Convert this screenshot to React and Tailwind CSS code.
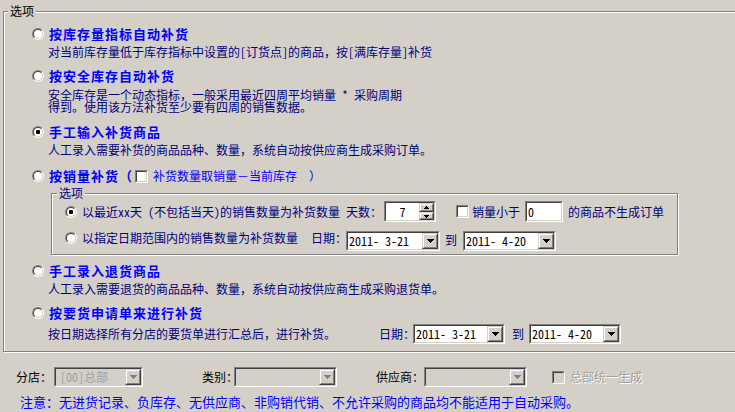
import React from 'react';

function Radio({ checked }) {
  return (
    <span className="relative block w-[12px] h-[12px] shrink-0 rounded-full border border-t-[#808080] border-l-[#808080] border-b-white border-r-white">
      <span className="absolute inset-0 flex items-center justify-center rounded-full border border-t-[#404040] border-l-[#404040] border-b-[#d4d0c8] border-r-[#d4d0c8] bg-white">
        {checked && <span className="block w-[4px] h-[4px] rounded-[1px] bg-black" />}
      </span>
    </span>
  );
}

function Check({ disabled }) {
  return (
    <span className="block w-[13px] h-[13px] shrink-0 border border-t-[#808080] border-l-[#808080] border-b-white border-r-white">
      <span
        className={`block w-full h-full border border-t-[#404040] border-l-[#404040] border-b-[#d4d0c8] border-r-[#d4d0c8] ${
          disabled ? 'bg-[#d4d0c8]' : 'bg-white'
        }`}
      />
    </span>
  );
}

function Sunken({ className = '', inner = 'bg-white', children }) {
  return (
    <div className={`shrink-0 border border-t-[#808080] border-l-[#808080] border-b-white border-r-white ${className}`}>
      <div className={`flex h-full w-full items-center border border-t-[#404040] border-l-[#404040] border-b-[#d4d0c8] border-r-[#d4d0c8] ${inner}`}>
        {children}
      </div>
    </div>
  );
}

function Btn({ className = '', children }) {
  return (
    <div className={`shrink-0 border border-t-[#d4d0c8] border-l-[#d4d0c8] border-b-[#404040] border-r-[#404040] ${className}`}>
      <div className="flex h-full w-full items-center justify-center border border-t-white border-l-white border-b-[#808080] border-r-[#808080] bg-[#d4d0c8]">
        {children}
      </div>
    </div>
  );
}

function Down({ color = '#000' }) {
  return (
    <svg width="7" height="4" viewBox="0 0 7 4" shapeRendering="crispEdges">
      <rect x="0" y="0" width="7" height="1" fill={color} />
      <rect x="1" y="1" width="5" height="1" fill={color} />
      <rect x="2" y="2" width="3" height="1" fill={color} />
      <rect x="3" y="3" width="1" height="1" fill={color} />
    </svg>
  );
}

function SmallArrow({ up }) {
  return (
    <svg width="5" height="3" viewBox="0 0 5 3" shapeRendering="crispEdges">
      {up ? (
        <>
          <rect x="2" y="0" width="1" height="1" fill="#000" />
          <rect x="1" y="1" width="3" height="1" fill="#000" />
          <rect x="0" y="2" width="5" height="1" fill="#000" />
        </>
      ) : (
        <>
          <rect x="0" y="0" width="5" height="1" fill="#000" />
          <rect x="1" y="1" width="3" height="1" fill="#000" />
          <rect x="2" y="2" width="1" height="1" fill="#000" />
        </>
      )}
    </svg>
  );
}

function Combo({ w, value = '', disabled }) {
  return (
    <Sunken className={`${w} h-[20px]`} inner={disabled ? 'bg-[#d4d0c8]' : 'bg-white'}>
      <span
        className={`flex-1 whitespace-pre text-[12px] leading-[12px] ${
          disabled ? 'pl-[4px] text-[#a0a0a0]' : 'pl-[1px] text-black'
        }`}
      >
        {value}
      </span>
      <Btn className="w-[16px] h-full">
        <Down color={disabled ? '#808080' : '#000'} />
      </Btn>
    </Sunken>
  );
}

const title = 'ml-[5px] whitespace-pre text-[13px] font-bold tracking-[1px] text-[#0000ff]';
const etched = 'border border-[#808080] shadow-[inset_1px_1px_0_#fff,1px_1px_0_#fff]';

export default function App() {
  return (
    <div className="w-[735px] h-[412px] overflow-hidden bg-[#d4d0c8] [font-family:'Noto_Sans_Mono_CJK_SC','Noto_Sans_CJK_SC',sans-serif] text-[12px] leading-[12px]">
      <div className="pt-[11px] pl-[3px]">
        <div className={`relative w-[760px] h-[341px] pl-[28px] ${etched}`}>
          <span className="absolute left-[4px] top-[-7px] px-[2px] bg-[#d4d0c8] text-black">选项</span>

          <div className="mt-[16px] flex h-[12px] items-center">
            <Radio />
            <span className={title}>按库存量指标自动补货</span>
          </div>
          <div className="mt-[6px] ml-[16px] whitespace-pre text-[#000080]">
            对当前库存量低于库存指标中设置的[订货点]的商品，按[满库存量]补货
          </div>

          <div className="mt-[12px] flex h-[12px] items-center">
            <Radio />
            <span className={title}>按安全库存自动补货</span>
          </div>
          <div className="mt-[7px] ml-[16px] flex flex-col text-[#000080]">
            <span className="h-[12px] whitespace-pre leading-[11px]">安全库存是一个动态指标，一般采用最近四周平均销量 * 采购周期</span>
            <span className="h-[12px] whitespace-pre leading-[11px]">得到。使用该方法补货至少要有四周的销售数据。</span>
          </div>

          <div className="mt-[13px] flex h-[12px] items-center">
            <Radio checked />
            <span className={title}>手工输入补货商品</span>
          </div>
          <div className="mt-[6px] ml-[16px] whitespace-pre text-[#000080]">
            人工录入需要补货的商品品种、数量，系统自动按供应商生成采购订单。
          </div>

          <div className="mt-[14px] flex h-[12px] items-center">
            <Radio />
            <span className={title}>按销量补货（</span>
            <span className="ml-[2px]">
              <Check />
            </span>
            <span className="ml-[5px] whitespace-pre text-[#0000ff]">补货数量取销量－当前库存  ）</span>
          </div>

          <div className={`relative mt-[11px] ml-[19px] w-[627px] h-[62px] pt-[7px] pl-[13px] ${etched}`}>
            <span className="absolute left-[5px] top-[-7px] px-[2px] bg-[#d4d0c8] text-[#000080]">选项</span>
            <div className="flex h-[21px] items-center text-[#000080]">
              <Radio checked />
              <span className="ml-[5px] w-[264px] shrink-0 whitespace-pre">以最近xx天 (不包括当天)的销售数量为补货数量</span>
              <span className="w-[38px] shrink-0 whitespace-pre">天数：</span>
              <Sunken className="w-[52px] h-[21px]">
                <span className="flex-1 text-center text-black">7</span>
                <div className="flex h-full w-[15px] flex-col">
                  <Btn className="h-[9px] w-full">
                    <SmallArrow up />
                  </Btn>
                  <Btn className="h-[8px] w-full">
                    <SmallArrow />
                  </Btn>
                </div>
              </Sunken>
              <span className="ml-[20px]">
                <Check />
              </span>
              <span className="ml-[3px] w-[53px] shrink-0 whitespace-pre">销量小于</span>
              <Sunken className="w-[38px] h-[21px]">
                <span className="pl-[1px] text-black">0</span>
              </Sunken>
              <span className="ml-[5px] whitespace-pre">的商品不生成订单</span>
            </div>
            <div className="mt-[9px] flex h-[20px] items-start text-[#000080]">
              <span className="mt-[1px]">
                <Radio />
              </span>
              <span className="ml-[5px] mt-[1px] w-[229px] shrink-0 whitespace-pre">以指定日期范围内的销售数量为补货数量</span>
              <span className="mt-[1px] w-[35px] shrink-0 whitespace-pre">日期：</span>
              <Combo w="w-[94px]" value="2011- 3-21" />
              <span className="ml-[5px] mt-[3px] w-[12px] shrink-0">到</span>
              <span className="ml-[6px]">
                <Combo w="w-[93px]" value="2011- 4-20" />
              </span>
            </div>
          </div>

          <div className="mt-[10px] flex h-[12px] items-center">
            <Radio />
            <span className={title}>手工录入退货商品</span>
          </div>
          <div className="mt-[6px] ml-[16px] whitespace-pre text-[#000080]">
            人工录入需要退货的商品品种、数量，系统自动按供应商生成采购退货单。
          </div>

          <div className="mt-[12px] flex h-[12px] items-center">
            <Radio />
            <span className={title}>按要货申请单来进行补货</span>
          </div>
          <div className="mt-[5px] ml-[16px] flex h-[20px] items-center text-[#000080]">
            <span className="w-[331px] shrink-0 whitespace-pre">按日期选择所有分店的要货单进行汇总后，进行补货。</span>
            <span className="w-[34px] shrink-0 whitespace-pre">日期：</span>
            <Combo w="w-[92px]" value="2011- 3-21" />
            <span className="ml-[7px] w-[12px] shrink-0">到</span>
            <span className="ml-[5px]">
              <Combo w="w-[92px]" value="2011- 4-20" />
            </span>
          </div>
        </div>
      </div>

      <div className="mt-[15px] flex h-[20px] items-center pl-[16px] text-black">
        <span className="w-[38px] shrink-0 whitespace-pre">分店：</span>
        <Combo w="w-[89px]" value="[00]总部" disabled />
        <span className="ml-[59px] w-[32px] shrink-0 whitespace-pre">类别：</span>
        <Combo w="w-[103px]" disabled />
        <span className="ml-[39px] w-[48px] shrink-0 whitespace-pre">供应商：</span>
        <Combo w="w-[103px]" disabled />
        <span className="ml-[25px]">
          <Check disabled />
        </span>
        <span className="ml-[5px] whitespace-pre text-[#a0a0a0] [text-shadow:1px_1px_0_#fff]">总部统一生成</span>
      </div>

      <div className="mt-[8px] pl-[20px] whitespace-pre text-[13px] leading-[13px] text-[#0000ff]">
        注意：无进货记录、负库存、无供应商、非购销代销、不允许采购的商品均不能适用于自动采购。
      </div>
    </div>
  );
}
